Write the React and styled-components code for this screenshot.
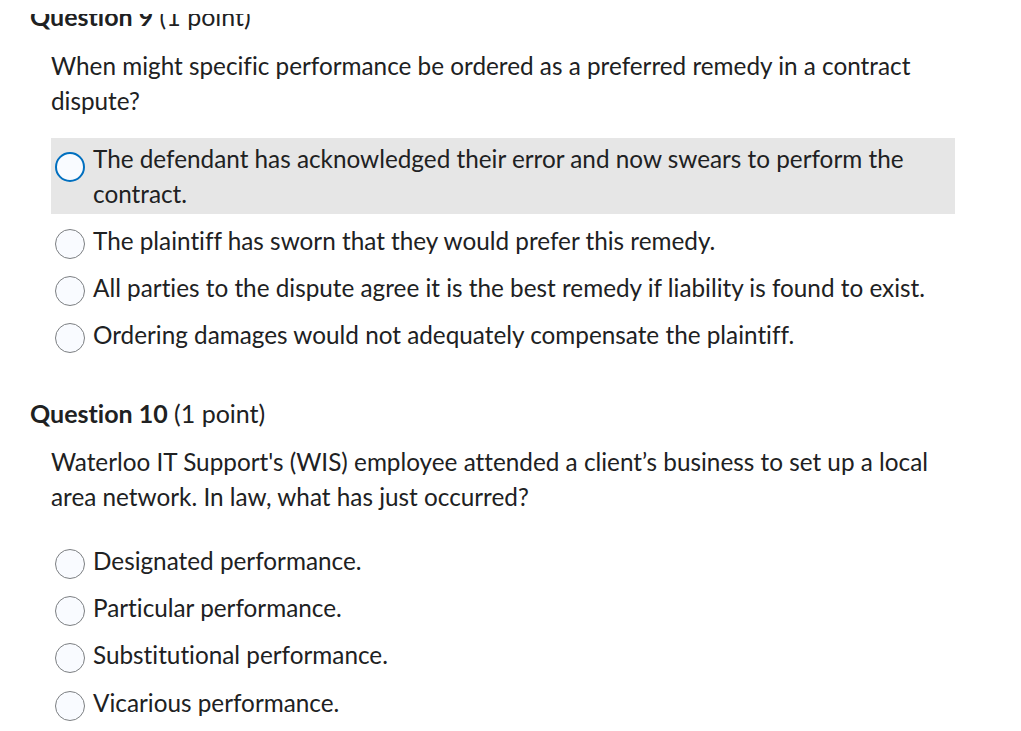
import styled, { createGlobalStyle } from "styled-components";

const GlobalStyle = createGlobalStyle`
  html, body {
    margin: 0;
    padding: 0;
    background: #ffffff;
  }
  body {
    font-family: Lato, "Liberation Sans", sans-serif;
    color: #202122;
    font-variant-ligatures: none;
  }
`;

const Page = styled.div`
  position: relative;
  width: 1021px;
  height: 731px;
  overflow: hidden;
  padding: 0 0 0 30px;
  box-sizing: border-box;
`;

// white strip of the page chrome that hides the top of the scrolled question
const TopCover = styled.div`
  position: absolute;
  top: 0;
  left: 0;
  right: 0;
  height: 14px;
  background: #ffffff;
`;

const Question = styled.section`
  margin-top: ${(p) => p.$offset}px;
`;

const Header = styled.h2`
  margin: 0;
  font-size: 25px;
  line-height: 30px;
  font-weight: 400;
`;

const Title = styled.span`
  font-weight: 700;
`;

const Body = styled.div`
  margin: 16.5px 0 0 21px;
  width: 904px;
`;

const Prompt = styled.p`
  margin: 0 0 ${(p) => p.$gap}px;
  font-size: 24.3px;
  line-height: 35px;
`;

const Options = styled.div`
  display: flex;
  flex-direction: column;
  gap: 6.3px;
`;

const Option = styled.label`
  display: flex;
  align-items: flex-start;
  gap: 8px;
  padding: 3px 30px 3px 4px;
  background: ${(p) => (p.$hover ? "#e6e6e6" : "transparent")};
  font-size: 24.3px;
  line-height: 35px;
`;

const Radio = styled.span`
  flex: 0 0 auto;
  width: 30px;
  height: 30px;
  margin-top: ${(p) => (p.$focus ? 11 : 6)}px;
  margin-bottom: -12px;
  box-sizing: border-box;
  border-radius: 50%;
  background: #f9fbff;
  border: ${(p) => (p.$focus ? "2.5px solid #006fbf" : "1px solid #7c7f82")};
`;

const questions = [
  {
    title: "Question 9",
    offset: 1,
    gap: 20,
    prompt:
      "When might specific performance be ordered as a preferred remedy in a contract dispute?",
    options: [
      "The defendant has acknowledged their error and now swears to perform the contract.",
      "The plaintiff has sworn that they would prefer this remedy.",
      "All parties to the dispute agree it is the best remedy if liability is found to exist.",
      "Ordering damages would not adequately compensate the plaintiff.",
    ],
    hover: 0,
  },
  {
    title: "Question 10",
    offset: 42.5,
    gap: 25.5,
    prompt:
      "Waterloo IT Support's (WIS) employee attended a client\u2019s business to set up a local area network. In law, what has just occurred?",
    options: [
      "Designated performance.",
      "Particular performance.",
      "Substitutional performance.",
      "Vicarious performance.",
    ],
    hover: -1,
  },
];

export default function App() {
  return (
    <>
      <GlobalStyle />
      <Page>
        {questions.map((q) => (
          <Question key={q.title} $offset={q.offset}>
            <Header>
              <Title>{q.title}</Title> (1 point)
            </Header>
            <Body>
              <Prompt $gap={q.gap}>{q.prompt}</Prompt>
              <Options>
                {q.options.map((o, i) => (
                  <Option key={o} $hover={i === q.hover}>
                    <Radio $focus={i === q.hover} />
                    <span>{o}</span>
                  </Option>
                ))}
              </Options>
            </Body>
          </Question>
        ))}
        <TopCover />
      </Page>
    </>
  );
}
